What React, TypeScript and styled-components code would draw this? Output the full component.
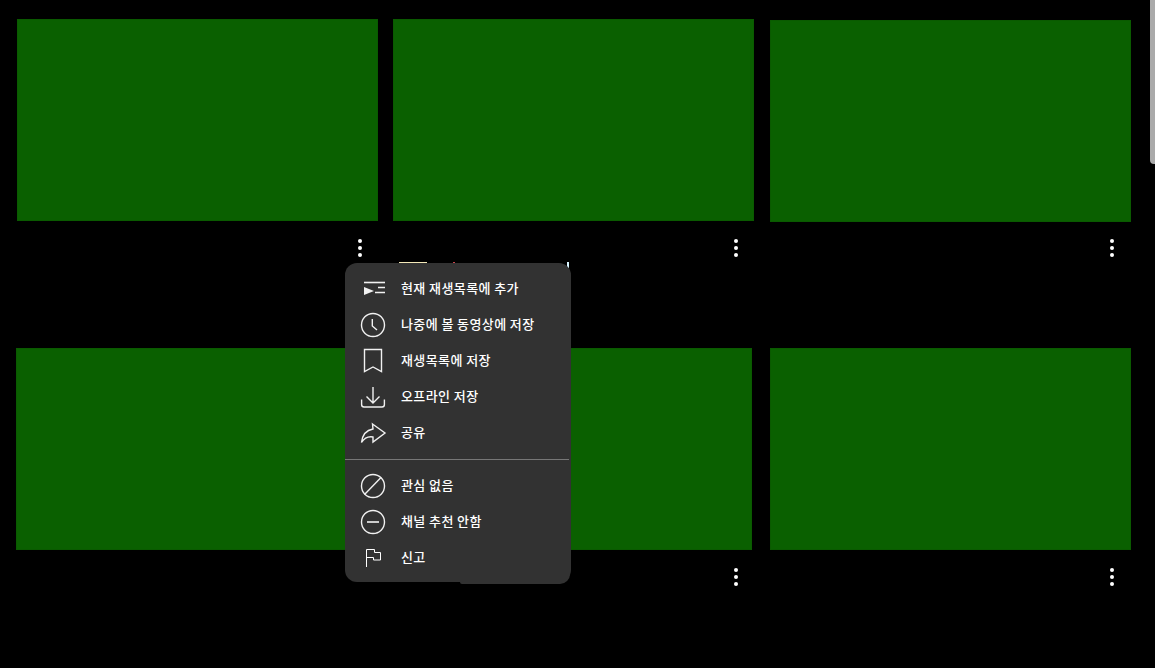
import React from "react";
import styled, { createGlobalStyle } from "styled-components";

const Global = createGlobalStyle`
  html, body { margin: 0; padding: 0; background: #000; overflow: hidden; }
  body { font-family: "Noto Sans CJK KR", "Noto Sans", sans-serif; }
`;

const Page = styled.main`
  position: relative;
  width: 1155px;
  height: 668px;
  background: #000;
  padding-top: 19px;
  box-sizing: border-box;
`;

const Row = styled.section`
  display: flex;
  height: 329px;
`;

const Card = styled.article<{ $left: number; $top?: number }>`
  width: 361px;
  margin-left: ${(p) => p.$left}px;
  padding-top: ${(p) => p.$top ?? 0}px;
  box-sizing: border-box;
`;

const Thumb = styled.div`
  height: 202px;
  background: #0a6000;
  box-shadow: inset 0 0 0 1px #0a5a00;
`;

const Meta = styled.div<{ $gap: number; $right: number }>`
  display: flex;
  justify-content: flex-end;
  margin-top: ${(p) => p.$gap}px;
  padding-right: ${(p) => p.$right}px;
`;

const DotsWrap = styled.div`
  display: flex;
  flex-direction: column;
  gap: 3px;
`;

const Dot = styled.span`
  display: block;
  width: 4px;
  height: 4px;
  border-radius: 50%;
  background: #fff;
`;

const Dots = () => (
  <DotsWrap>
    <Dot />
    <Dot />
    <Dot />
  </DotsWrap>
);

const Peek = styled.span<{ $x: number; $w: number; $h: number; $c: string }>`
  position: absolute;
  left: ${(p) => p.$x}px;
  top: 262px;
  width: ${(p) => p.$w}px;
  height: ${(p) => p.$h}px;
  background: ${(p) => p.$c};
`;

const Menu = styled.div`
  position: absolute;
  left: 345px;
  top: 263px;
  width: 226px;
  height: 319px;
  padding-top: 7px;
  box-sizing: border-box;
  background: #323232;
  border-radius: 12px;
  &::after {
    content: "";
    position: absolute;
    left: 115px;
    right: 1px;
    bottom: -2px;
    height: 20px;
    background: #323232;
    border-radius: 0 0 10px 2px;
  }
`;

const Item = styled.div`
  display: flex;
  align-items: center;
  height: 36px;
  padding-left: 16px;
  gap: 16px;
  color: #fff;
  font-size: 13px;
  font-weight: 500;
  letter-spacing: 0.4px;
  white-space: nowrap;
`;

const Label = styled.span`
  display: block;
  padding-bottom: 2px;
`;

const Glyph = styled.svg`
  flex: none;
  width: 24px;
  height: 24px;
  overflow: visible;
  fill: none;
  stroke: #f1f1f1;
  stroke-width: 1.4;
`;

const Divider = styled.hr`
  margin: 9px 2px 7px 0;
  height: 1px;
  border: 0;
  background: #777;
`;

const ScrollThumb = styled.div`
  position: absolute;
  right: 0;
  top: 0;
  width: 5px;
  height: 164px;
  background: #aaa;
  border-bottom-left-radius: 4px;
`;

const items: { label: string; icon: React.ReactNode }[] = [
  {
    label: "현재 재생목록에 추가",
    icon: (
      <>
        <path d="M3 6.5H24" strokeWidth="1.6" />
        <path d="M17 11.5H24M14 16.5H24" strokeWidth="1.6" />
        <path d="M3 11 L13 15 L3 19 Z" fill="#f1f1f1" stroke="none" />
      </>
    ),
  },
  {
    label: "나중에 볼 동영상에 저장",
    icon: (
      <>
        <circle cx="12" cy="13" r="11.5" />
        <path d="M11.3 7V14L16 18" />
      </>
    ),
  },
  {
    label: "재생목록에 저장",
    icon: <path d="M3.5 1.5H20.5V23.5L12 19L3.5 23.5Z" />,
  },
  {
    label: "오프라인 저장",
    icon: (
      <>
        <path d="M12 3V19M5.5 12.5L12 19L18.5 12.5" />
        <path d="M.6 15.5V20.5Q.6 23 3 23H21Q23.4 23 23.4 20.5V15.5" />
      </>
    ),
  },
  {
    label: "공유",
    icon: <path d="M11.5 4L24 13L12 22V17C6 16 3 18.5 .5 22.5C1.5 14 6 10 12 9Z" />,
  },
];

const items2: { label: string; icon: React.ReactNode }[] = [
  {
    label: "관심 없음",
    icon: (
      <>
        <circle cx="12" cy="13" r="11.5" />
        <path d="M20 4.5L3.5 21.5" />
      </>
    ),
  },
  {
    label: "채널 추천 안함",
    icon: (
      <>
        <circle cx="12" cy="13" r="11.5" />
        <path d="M6 13H18" strokeWidth="2" stroke="#ccc" />
      </>
    ),
  },
  {
    label: "신고",
    icon: <path d="M5.5 22V4.5H13.5V7.5H19.5V15H12.5V12.5H5.5" strokeWidth="1" stroke="#fff" />,
  },
];

const Entry = ({ label, icon }: { label: string; icon: React.ReactNode }) => (
  <Item>
    <Glyph viewBox="0 0 24 24">{icon}</Glyph>
    <Label>{label}</Label>
  </Item>
);

export default function App() {
  return (
    <Page>
      <Global />
      <Row>
        <Card $left={17}>
          <Thumb />
          <Meta $gap={18} $right={16}>
            <Dots />
          </Meta>
        </Card>
        <Card $left={15}>
          <Thumb />
          <Meta $gap={18} $right={16}>
            <Dots />
          </Meta>
        </Card>
        <Card $left={16} $top={1}>
          <Thumb />
          <Meta $gap={17} $right={17}>
            <Dots />
          </Meta>
        </Card>
      </Row>
      <Row>
        <Card $left={16}>
          <Thumb />
        </Card>
        <Card $left={14}>
          <Thumb />
          <Meta $gap={18} $right={14}>
            <Dots />
          </Meta>
        </Card>
        <Card $left={18}>
          <Thumb />
          <Meta $gap={18} $right={17}>
            <Dots />
          </Meta>
        </Card>
      </Row>
      <Peek $x={399} $w={28} $h={2} $c="#f3e8b8" />
      <Peek $x={453} $w={2} $h={2} $c="#c8434a" />
      <Peek $x={567} $w={2} $h={6} $c="#d8f4ff" />
      <Menu>
        {items.map((it) => (
          <Entry key={it.label} {...it} />
        ))}
        <Divider />
        {items2.map((it) => (
          <Entry key={it.label} {...it} />
        ))}
      </Menu>
      <ScrollThumb />
    </Page>
  );
}
